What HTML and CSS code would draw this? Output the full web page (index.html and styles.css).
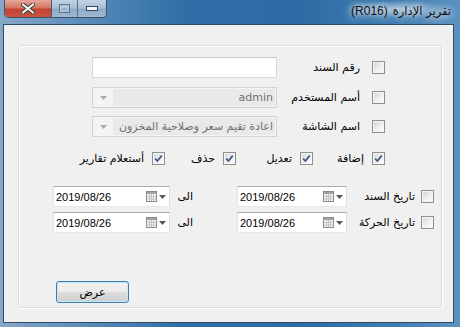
FILE: index.html
```html
<!DOCTYPE html>
<html lang="ar">
<head>
<meta charset="utf-8">
<title>تقرير الإدارة</title>
<link rel="stylesheet" href="styles.css">
</head>
<body>
<div class="window">
  <div class="titlebar">
    <div class="caption-btns">
      <div class="cbtn close">
        <svg width="14" height="11" viewBox="0 0 14 11"><path d="M2 1.5 L12 9.5 M12 1.5 L2 9.5" stroke="#3b3b3b" stroke-width="4" stroke-linecap="square"/><path d="M2 1.5 L12 9.5 M12 1.5 L2 9.5" stroke="#f2f2f2" stroke-width="2" stroke-linecap="square"/></svg>
      </div>
      <div class="cbtn max">
        <svg width="11" height="9" viewBox="0 0 11 9"><rect x="0.5" y="0.5" width="10" height="8" fill="none" stroke="#5d7690"/><rect x="2" y="3" width="7" height="4" fill="none" stroke="#c3d2e0"/></svg>
      </div>
      <div class="cbtn min">
        <svg width="12" height="6" viewBox="0 0 12 6"><rect x="0.5" y="0.5" width="11" height="4" fill="#f4f4f4" stroke="#34495e"/></svg>
      </div>
    </div>
    <div class="title" dir="ltr"><span class="code">(R016)</span><span class="name" dir="rtl">تقرير الإدارة</span></div>
  </div>
  <div class="client">
    <div class="group" dir="rtl">
      <div class="row r1">
        <span class="cb"></span>
        <label class="lbl">رقم السند</label>
        <div class="edit"></div>
      </div>
      <div class="row r2">
        <span class="cb"></span>
        <label class="lbl">أسم المستخدم</label>
        <div class="combo">
          <div class="combo-text">admin</div>
          <div class="combo-arrow"><svg width="7" height="4" viewBox="0 0 7 4"><path d="M0 0h7L3.5 4z" fill="#a9a9a9"/></svg></div>
        </div>
      </div>
      <div class="row r3">
        <span class="cb"></span>
        <label class="lbl">اسم الشاشة</label>
        <div class="combo">
          <div class="combo-text">اعادة تقيم سعر وصلاحية المخزون</div>
          <div class="combo-arrow"><svg width="7" height="4" viewBox="0 0 7 4"><path d="M0 0h7L3.5 4z" fill="#a9a9a9"/></svg></div>
        </div>
      </div>
      <div class="row checks">
        <div class="chk w1"><span class="cb on"><svg width="11" height="11" viewBox="0 0 11 11"><path d="M2.2 5.6 L4.4 8 L8.8 2.6" fill="none" stroke="#3d5486" stroke-width="1.7"/></svg></span><span class="ctext">إضافة</span></div>
        <div class="chk w2"><span class="cb on"><svg width="11" height="11" viewBox="0 0 11 11"><path d="M2.2 5.6 L4.4 8 L8.8 2.6" fill="none" stroke="#3d5486" stroke-width="1.7"/></svg></span><span class="ctext">تعديل</span></div>
        <div class="chk w3"><span class="cb on"><svg width="11" height="11" viewBox="0 0 11 11"><path d="M2.2 5.6 L4.4 8 L8.8 2.6" fill="none" stroke="#3d5486" stroke-width="1.7"/></svg></span><span class="ctext">حذف</span></div>
        <div class="chk"><span class="cb on"><svg width="11" height="11" viewBox="0 0 11 11"><path d="M2.2 5.6 L4.4 8 L8.8 2.6" fill="none" stroke="#3d5486" stroke-width="1.7"/></svg></span><span class="ctext">أستعلام تقارير</span></div>
      </div>
      <div class="row date-row d1">
        <span class="cb"></span>
        <label class="dlbl">تاريخ السند</label>
        <div class="date short" dir="ltr"><span class="dval">2019/08/26</span><span class="dbtn"><svg width="11" height="11" viewBox="0 0 11 11"><rect x="0.5" y="0.5" width="10" height="10" fill="#f7f7f7" stroke="#8c8c8c"/><rect x="1" y="1" width="9" height="2" fill="#a3a3a3"/><path d="M1 5.5h9M1 8h9M3.5 3v7M5.5 3v7M7.5 3v7" stroke="#c2c2c2"/></svg><svg class="darr" width="7" height="4" viewBox="0 0 7 4"><path d="M0 0h7L3.5 4z" fill="#4e5a67"/></svg></span></div>
        <label class="to">الى</label>
        <div class="date long" dir="ltr"><span class="dval">2019/08/26</span><span class="dbtn"><svg width="11" height="11" viewBox="0 0 11 11"><rect x="0.5" y="0.5" width="10" height="10" fill="#f7f7f7" stroke="#8c8c8c"/><rect x="1" y="1" width="9" height="2" fill="#a3a3a3"/><path d="M1 5.5h9M1 8h9M3.5 3v7M5.5 3v7M7.5 3v7" stroke="#c2c2c2"/></svg><svg class="darr" width="7" height="4" viewBox="0 0 7 4"><path d="M0 0h7L3.5 4z" fill="#4e5a67"/></svg></span></div>
      </div>
      <div class="row date-row d2">
        <span class="cb"></span>
        <label class="dlbl">تاريخ الحركة</label>
        <div class="date short" dir="ltr"><span class="dval">2019/08/26</span><span class="dbtn"><svg width="11" height="11" viewBox="0 0 11 11"><rect x="0.5" y="0.5" width="10" height="10" fill="#f7f7f7" stroke="#8c8c8c"/><rect x="1" y="1" width="9" height="2" fill="#a3a3a3"/><path d="M1 5.5h9M1 8h9M3.5 3v7M5.5 3v7M7.5 3v7" stroke="#c2c2c2"/></svg><svg class="darr" width="7" height="4" viewBox="0 0 7 4"><path d="M0 0h7L3.5 4z" fill="#4e5a67"/></svg></span></div>
        <label class="to">الى</label>
        <div class="date long" dir="ltr"><span class="dval">2019/08/26</span><span class="dbtn"><svg width="11" height="11" viewBox="0 0 11 11"><rect x="0.5" y="0.5" width="10" height="10" fill="#f7f7f7" stroke="#8c8c8c"/><rect x="1" y="1" width="9" height="2" fill="#a3a3a3"/><path d="M1 5.5h9M1 8h9M3.5 3v7M5.5 3v7M7.5 3v7" stroke="#c2c2c2"/></svg><svg class="darr" width="7" height="4" viewBox="0 0 7 4"><path d="M0 0h7L3.5 4z" fill="#4e5a67"/></svg></span></div>
      </div>
      <div class="actions">
        <button class="btn" type="button">عرض</button>
      </div>
    </div>
  </div>
</div>
</body>
</html>
```
FILE: styles.css
```css
* { box-sizing: border-box; }
html, body { margin: 0; padding: 0; }
body {
  width: 460px;
  height: 327px;
  overflow: hidden;
  font-family: "Liberation Sans", "DejaVu Sans", sans-serif;
  font-size: 11px;
  color: #000;
}
.window {
  width: 460px;
  height: 327px;
  display: flex;
  flex-direction: column;
  padding: 0 6px 4px 3px;
  background: linear-gradient(to right, #86a8c8 0%, #5a8cb9 18%, #2f6ea6 40%, #2c6ba3 65%, #3f7cb2 85%, #5d92c0 100%);
}
.titlebar {
  height: 24px;
  display: flex;
  align-items: flex-start;
  justify-content: space-between;
  flex: none;
}
.caption-btns {
  display: flex;
  margin-left: 1px;
  height: 18px;
  border: 1px solid #3c526b;
  border-top: none;
  border-radius: 0 0 5px 5px;
  overflow: hidden;
}
.cbtn {
  height: 100%;
  display: flex;
  align-items: center;
  justify-content: center;
}
.cbtn.close {
  width: 47px;
  background: linear-gradient(#e7a899 0%, #d47563 45%, #c44232 55%, #c9553e 100%);
  border-right: 1px solid #4d5c6e;
}
.cbtn.max {
  width: 26px;
  background: linear-gradient(#c2d3e3 0%, #a9c0d6 45%, #8eaac6 55%, #9fb9d2 100%);
  border-right: 1px solid #5b7088;
}
.cbtn.min {
  width: 28px;
  background: linear-gradient(#c2d3e3 0%, #a9c0d6 45%, #8eaac6 55%, #9fb9d2 100%);
}
.title {
  display: flex;
  align-items: baseline;
  gap: 5px;
  padding: 4px 3px 0 8px;
  font-family: "DejaVu Sans", sans-serif;
  font-size: 11.5px;
  color: #111;
  text-shadow: 0 0 6px #fff, 0 0 10px rgba(255,255,255,.9);
  background: radial-gradient(ellipse at center, rgba(255,255,255,.5), rgba(255,255,255,0) 70%);
}
.title .code { font-family: "Liberation Sans", sans-serif; font-size: 12px; }
.client {
  flex: 1;
  border: 1px solid #2f4c69;
  background: #f0f0f0;
  padding: 20px 11px 14px 14px;
  display: flex;
}
.group {
  flex: 1;
  border: 1px solid #d5dfe5;
  border-radius: 3px;
  box-shadow: inset 1px 1px 0 #fff, 1px 1px 0 #fff;
  display: flex;
  flex-direction: column;
  padding: 11px 0 0 0;
  font-family: "DejaVu Sans", sans-serif;
}
.row {
  display: flex;
  align-items: center;
  height: 21px;
  flex: none;
}
.r1, .r2, .r3 { margin-right: 56px; }
.r2, .r3 { margin-top: 8px; }
.r2 { margin-top: 9px; }
.cb {
  width: 13px;
  height: 13px;
  flex: none;
  border: 1px solid #8e8f8f;
  background: linear-gradient(135deg, #cfd2d6 0%, #eef0f1 55%, #fbfbfb 100%);
  box-shadow: inset 0 0 0 1px #f6f6f6;
  display: flex;
  align-items: center;
  justify-content: center;
}
.cb svg { display: block; }
.lbl {
  width: 95px;
  flex: none;
  padding-right: 12px;
  font-size: 11px;
}
.edit {
  width: 185px;
  height: 21px;
  background: #fff;
  border: 1px solid #d6d9dd;
  border-top-color: #c4c7cb;
}
.combo {
  width: 185px;
  height: 21px;
  display: flex;
  border: 1px solid #d2d2d2;
  background: #f4f4f4;
  padding: 1px;
}
.combo-text {
  flex: 1;
  background: #e9e9e9;
  color: #6f6f6f;
  padding: 0 2px;
  display: flex;
  align-items: center;
  white-space: nowrap;
  overflow: hidden;
}
.combo-arrow {
  width: 19px;
  display: flex;
  align-items: center;
  justify-content: center;
}
.combo-arrow svg { display: block; }
.checks {
  margin-top: 11px;
  margin-right: 56px;
}
.chk {
  display: flex;
  align-items: center;
  gap: 8px;
  flex: none;
}
.chk.w1 { width: 72px; }
.chk.w2 { width: 77px; }
.chk.w3 { width: 71px; }
.date-row { margin-right: 7px; }
.d1 { margin-top: 17px; }
.d2 { margin-top: 5px; }
.dlbl {
  width: 74px;
  flex: none;
  padding-right: 6px;
}
.date {
  height: 21px;
  display: flex;
  align-items: center;
  justify-content: space-between;
  background: #fff;
  border: 1px solid #abadb3;
  border-color: #abadb3 #dbdfe6 #e3e9ef #e2e3ea;
  padding: 0 3px 0 2px;
  font-family: "Liberation Sans", sans-serif;
  font-size: 11px;
  flex: none;
}
.date.short { width: 110px; }
.date.long { width: 117px; }
.dbtn {
  display: flex;
  align-items: center;
  gap: 2px;
}
.dbtn svg { display: block; }
.to {
  width: 67px;
  flex: none;
  padding-right: 44px;
}
.actions {
  margin-top: auto;
  margin-bottom: 4px;
  display: flex;
  justify-content: flex-end;
  padding-left: 37px;
}
.btn {
  width: 73px;
  height: 22px;
  font-family: "DejaVu Sans", sans-serif;
  font-size: 11px;
  color: #000;
  border: 1px solid #3c7fb1;
  border-radius: 3px;
  box-shadow: inset 0 0 0 1px #c8e6f5;
  background: linear-gradient(#f2f2f2 0%, #ebebeb 48%, #dddddd 52%, #cfcfcf 100%);
  padding: 0;
  cursor: default;
}
```
